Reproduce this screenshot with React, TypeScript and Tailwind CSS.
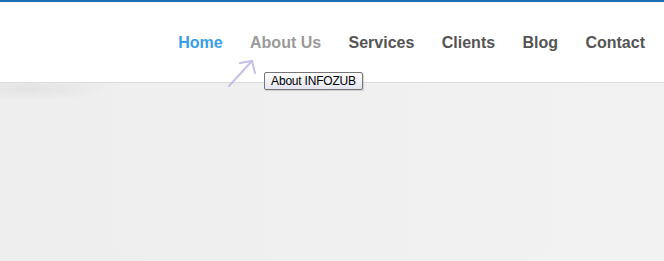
const navItems = [
  { label: 'Home', className: 'text-[#3a9ee6]' },
  { label: 'About Us', className: 'text-[#9a9a9a]' },
  { label: 'Services', className: 'text-[#555555]' },
  { label: 'Clients', className: 'text-[#555555]' },
  { label: 'Blog', className: 'text-[#555555]' },
  { label: 'Contact', className: 'text-[#555555]' },
];

function CursorArrow() {
  // hand-drawn pointer arrow that sits over the header edge
  return (
    <svg
      className="absolute left-[224px] top-[56px] pointer-events-none"
      width="36"
      height="34"
      viewBox="0 0 36 34"
      fill="none"
    >
      <g stroke="#c4bce6" strokeWidth="2" strokeLinecap="round" opacity="0.95">
        <path d="M5 30 L28 5" />
        <path d="M28 5 L16 7" />
        <path d="M28 5 L31 17" />
      </g>
    </svg>
  );
}

export default function App() {
  return (
    <div className="relative w-[664px] h-[261px] overflow-hidden bg-white font-['Liberation_Sans',Arial,sans-serif]">
      <div className="h-[2px] bg-[#1f6db5]" />

      <header className="h-[81px] bg-white border-b border-[#dcdcdc]">
        <nav className="flex justify-end gap-[27.4px] pr-[19px] pt-[32px]">
          {navItems.map(item => (
            <a
              key={item.label}
              href="#"
              className={`text-[16px] leading-[18px] font-bold ${item.className}`}
            >
              {item.label}
            </a>
          ))}
        </nav>
      </header>

      <main className="h-[178px] bg-gradient-to-r from-[#efeeee] via-[#f1f0f0] to-[#f3f2f2]">
        <div className="h-[24px] w-[170px] bg-[radial-gradient(ellipse_85px_12px_at_30px_6px,rgba(0,0,0,0.05),transparent)]" />
      </main>

      <CursorArrow />

      {/* browser tooltip for "About Us" */}
      <div className="absolute left-[264px] top-[72px] w-[99px] h-[18px] flex items-center justify-center rounded-[2px] border border-[#767676] bg-gradient-to-b from-white to-[#e4e5f0] shadow-[1px_1px_1px_rgba(0,0,0,0.15)]">
        <span className="text-[12px] leading-[14px] tracking-[-0.2px] text-black">About INFOZUB</span>
      </div>
    </div>
  );
}
